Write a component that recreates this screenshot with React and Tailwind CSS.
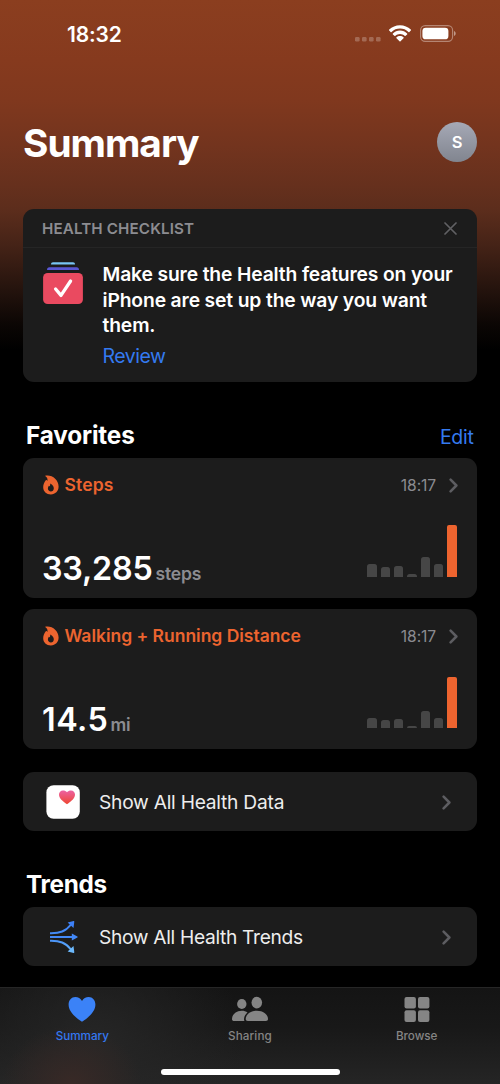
import React from "react";

function StatusBar() {
  return (
    <div className="flex h-[68px] items-center pl-[67px] pr-[44px] text-white">
      <span className="text-[21px] leading-[21px] font-semibold tracking-[-0.15px]">18:32</span>
      <div className="ml-auto flex items-center">
        <svg width="26" height="5" viewBox="0 0 26 5" className="mt-[11px]" fill="#fff" fillOpacity="0.24">
          <rect x="0" y="0" width="4.6" height="4.6" rx="1.3" />
          <rect x="7" y="0" width="4.6" height="4.6" rx="1.3" />
          <rect x="14" y="0" width="4.6" height="4.6" rx="1.3" />
          <rect x="21" y="0" width="4.6" height="4.6" rx="1.3" />
        </svg>
        <svg width="22" height="17" viewBox="0 0 22 17" className="ml-[8px] mt-[-1px]" fill="#fff">
          <path d="M11 0.2C15.2 0.2 19 1.8 21.8 4.5C22.1 4.8 22.1 5.2 21.8 5.5L20.4 6.9C20.1 7.2 19.7 7.2 19.4 6.9C17.2 4.8 14.2 3.6 11 3.6C7.8 3.6 4.8 4.8 2.6 6.9C2.3 7.2 1.9 7.2 1.6 6.9L0.2 5.5C-0.1 5.2 -0.1 4.8 0.2 4.5C3 1.8 6.8 0.2 11 0.2Z" />
          <path d="M11 5.6C13.8 5.6 16.3 6.7 18.1 8.4C18.4 8.7 18.4 9.1 18.1 9.4L16.6 10.8C16.3 11.1 15.9 11.1 15.6 10.8C14.4 9.7 12.8 9 11 9C9.2 9 7.6 9.7 6.4 10.8C6.1 11.1 5.7 11.1 5.4 10.8L3.9 9.4C3.6 9.1 3.6 8.7 3.9 8.4C5.7 6.7 8.2 5.6 11 5.6Z" />
          <path d="M11 10.9C12.4 10.9 13.6 11.4 14.5 12.2C14.8 12.5 14.8 12.9 14.5 13.2L11.5 16.2C11.2 16.5 10.8 16.5 10.5 16.2L7.5 13.2C7.2 12.9 7.2 12.5 7.5 12.2C8.4 11.4 9.6 10.9 11 10.9Z" />
        </svg>
        <svg width="36" height="17" viewBox="0 0 36 17" className="ml-[9px] mt-[-1px]">
          <rect x="0.6" y="0.6" width="32" height="15.8" rx="4.6" fill="none" stroke="#fff" strokeOpacity="0.38" strokeWidth="1.15" />
          <rect x="2.4" y="2.7" width="26" height="11.6" rx="3.4" fill="#fff" />
          <path d="M34 6V11C35.1 10.6 35.7 9.6 35.7 8.5C35.7 7.4 35.1 6.4 34 6Z" fill="#fff" fillOpacity="0.48" />
        </svg>
      </div>
    </div>
  );
}

function Chevron({ className }) {
  return (
    <svg width="9" height="15" viewBox="0 0 9 15" className={className} fill="none" stroke="#5d5d61" strokeWidth="2.5" strokeLinecap="round" strokeLinejoin="round">
      <path d="M1.6 1.6L7.4 7.5L1.6 13.4" />
    </svg>
  );
}

function Flame() {
  return (
    <svg width="16" height="20" viewBox="0 0 16 20" className="relative top-[-0.5px] shrink-0">
      <path d="M2.6 0.6C8.8 -0.6 15.6 4.3 15.6 11.6C15.6 16.4 12.3 19.4 7.9 19.4C3.4 19.4 0.2 16.4 0.2 12.2C0.2 9.4 1.3 7 2.8 5.2C3.2 4.7 3.9 4.9 4.1 5.4L4.4 6.1C4.9 4.1 4 2.2 2.5 1.3C2.2 1.1 2.3 0.7 2.6 0.6Z" fill="#ec642f" />
      <path d="M7.2 8.6C9.6 9.6 10.9 11.6 10.8 13.6C10.7 15.4 9.5 16.5 7.9 16.5C6.2 16.5 4.9 15.3 4.9 13.6C4.9 12.5 5.3 11.6 5.9 10.8C6.2 11 6.5 11.3 6.7 11.6C7.2 10.7 7.4 9.7 7.2 8.6Z" fill="#1c1c1c" />
    </svg>
  );
}

function Bars({ heights }) {
  return (
    <div className="flex h-[52px] items-end gap-[4px]">
      {heights.map((h, i) => (
        <div
          key={i}
          className={i === heights.length - 1 ? "w-[9.33px] rounded-t-[2px] bg-[#ee642f]" : "w-[9.33px] rounded-t-[2.5px] bg-[#464646]"}
          style={{ height: h }}
        />
      ))}
    </div>
  );
}

function MetricCard({ title, titleClass, value, valueClass, unit, unitClass, heights, barsClass }) {
  return (
    <section className="flex h-[140px] flex-col rounded-[11px] bg-[#1c1c1c] pl-[19.5px] pr-[19px]">
      <div className="mt-[17px] flex h-[20px] items-center">
        <Flame />
        <h3 className={titleClass}>{title}</h3>
        <span className="relative top-[1px] ml-auto text-[15.6px] leading-[20px] tracking-[-0.1px] text-[#8b8b90]">18:17</span>
        <Chevron className="mt-[1px] mr-[0.5px] ml-[12.5px]" />
      </div>
      <div className="mt-auto mb-[6px] flex items-end">
        <p className="ml-[-0.5px] flex items-baseline text-[32.3px] leading-[36px] font-semibold text-white">
          <span className={valueClass}>{value}</span>
          <span className={unitClass}>{unit}</span>
        </p>
        <div className={barsClass}>
          <Bars heights={heights} />
        </div>
      </div>
    </section>
  );
}

function LinkCard({ icon, label, labelClass }) {
  return (
    <section className="flex h-[59px] items-center rounded-[11px] bg-[#1c1c1c] pl-[23px] pr-[26px]">
      <div className="flex w-[34px] items-center justify-center">{icon}</div>
      <span className={labelClass}>{label}</span>
      <Chevron className="ml-auto mt-[1px]" />
    </section>
  );
}

function HealthIcon() {
  return (
    <svg width="34" height="34" viewBox="0 0 34 34" className="relative left-[0.4px]">
      <defs>
        <linearGradient id="heart" x1="0" y1="0" x2="0" y2="1">
          <stop offset="0" stopColor="#ec62a4" />
          <stop offset="1" stopColor="#ee4630" />
        </linearGradient>
      </defs>
      <rect x="0.4" y="0.2" width="33.4" height="33.6" rx="7.2" fill="#fff" />
      <path d="M21 19.3C16 16.2 13 12.8 13 9.6C13 7.1 14.7 5.4 16.9 5.4C18.6 5.4 20.1 6 21 7.3C21.9 6 23.4 5.4 25.1 5.4C27.3 5.4 29 7.1 29 9.6C29 12.8 26 16.2 21 19.3Z" fill="url(#heart)" />
    </svg>
  );
}

function TrendsIcon() {
  return (
    <svg width="30" height="34" viewBox="0 0 30 34" className="ml-[2px]" fill="none" strokeWidth="2">
      <defs>
        <linearGradient id="trend" gradientUnits="userSpaceOnUse" x1="0" y1="0" x2="0" y2="34">
          <stop offset="0" stopColor="#3d80f7" />
          <stop offset="0.55" stopColor="#4690f8" />
          <stop offset="1" stopColor="#6cb8fb" />
        </linearGradient>
      </defs>
      <g stroke="url(#trend)">
        <path d="M1 13.2C11 13.4 16.5 11.5 22 4.5" />
        <path d="M1 17.01L24 17" stroke="#4389f8" />
        <path d="M1 20.8C11 20.6 16.5 22.5 22 29.5" />
      </g>
      <path d="M18.6 2.4L24.6 1.1C25.1 1 25.4 1.3 25.3 1.8L24.5 8Z" fill="#3d80f7" />
      <path d="M22.8 13.4L28.4 16.5C28.9 16.8 28.9 17.2 28.4 17.5L22.8 20.6Z" fill="#4389f8" />
      <path d="M18.6 31.6L24.6 32.9C25.1 33 25.4 32.7 25.3 32.2L24.5 26Z" fill="#6cb8fb" />
    </svg>
  );
}

function ChecklistIcon() {
  return (
    <svg width="40" height="42" viewBox="0 0 40 42" className="shrink-0">
      <path d="M8 2.6C8 1 8.8 0.2 10 0.2H30C31.2 0.2 32 1 32 2.6Z" fill="#78c5f4" />
      <path d="M4 8C4 6.2 4.9 5.2 6.3 5.2H33.7C35.1 5.2 36 6.2 36 8Z" fill="#5957d3" />
      <rect x="0.1" y="11" width="39.8" height="31" rx="4.6" fill="#ea4a60" />
      <path d="M12.6 27L18 33.4L27.6 19" fill="none" stroke="#fff" strokeWidth="3.3" strokeLinecap="round" strokeLinejoin="round" />
    </svg>
  );
}

function TabBar() {
  return (
    <nav className="flex h-[97px] flex-col border-t border-[#262626] bg-[radial-gradient(ellipse_70px_58px_at_72px_100%,#382926_0%,#2c262500_100%),radial-gradient(ellipse_150px_130px_at_95px_60%,#262626_0%,#26262600_100%),linear-gradient(to_bottom,#141414,#181818_40%,#252525)]">
      <div className="grid h-[62px] grid-cols-3 text-[11.7px] leading-[14px] font-medium text-[#858585]">
        <div className="flex flex-col items-center pt-[8px] pr-[2px] text-[#3478f0]">
          <svg width="28" height="26" viewBox="0 0 28 26" fill="#3b82f7">
            <path d="M14 25.8C5.6 20.4 0.6 14.6 0.6 8.6C0.6 4.3 3.5 1 7.3 1C10.2 1 12.6 2.3 14 4.9C15.4 2.3 17.8 1 20.7 1C24.5 1 27.4 4.3 27.4 8.6C27.4 14.6 22.4 20.4 14 25.8Z" />
          </svg>
          <span className="mt-[7px] tracking-[-0.05px]">Summary</span>
        </div>
        <div className="flex flex-col items-center pt-[8px]">
          <svg width="38" height="26" viewBox="0 0 38 26" fill="#858585">
            <ellipse cx="10.8" cy="8" rx="4.7" ry="5.1" />
            <path d="M1 23.2C1 18.6 5.2 14.8 10.8 14.8C13 14.8 15 15.4 16.5 16.4C14.3 18.3 13 20.8 13 23.3C13 24.2 13.2 24.7 13.5 25H3.2C1.8 25 1 24.4 1 23.2Z" />
            <ellipse cx="25.8" cy="6.6" rx="5.3" ry="5.8" />
            <path d="M14.7 23.1C14.7 18.7 19 14.7 25.9 14.7C32.7 14.7 37 18.7 37 23.1C37 24.4 36.2 25 34.8 25H16.9C15.5 25 14.7 24.4 14.7 23.1Z" />
          </svg>
          <span className="mt-[7px] tracking-[0.1px]">Sharing</span>
        </div>
        <div className="flex flex-col items-center pt-[8px]">
          <svg width="26" height="26" viewBox="0 0 26 26" fill="#858585">
            <rect x="0.5" y="1" width="11.4" height="11.6" rx="2" />
            <rect x="14" y="1" width="11.4" height="11.6" rx="2" />
            <rect x="0.5" y="14.3" width="11.4" height="11.6" rx="2" />
            <rect x="14" y="14.3" width="11.4" height="11.6" rx="2" />
          </svg>
          <span className="mt-[7px] tracking-[-0.05px]">Browse</span>
        </div>
      </div>
      <div className="mx-auto mt-[19px] h-[6px] w-[179px] rounded-full bg-white" />
    </nav>
  );
}

export default function App() {
  return (
    <div className="flex h-[1084px] w-[500px] flex-col overflow-hidden bg-black bg-[linear-gradient(to_bottom,#8b3e1f_0px,#863a1e_60px,#80381e_100px,#73341e_145px,#66301d_185px,#5c2d1c_210px,#452317_245px,#24130d_290px,#0b0604_325px,#000_350px)] font-['Inter',sans-serif]">
      <StatusBar />
      <main className="flex h-[919px] flex-col px-[23px]">
        <header className="mt-[53px] flex h-[41px] items-center justify-between">
          <h1 className="pt-[1px] text-[38.8px] leading-[41px] font-bold tracking-[-1px] text-white">Summary</h1>
          <div className="flex h-[40px] w-[40px] items-center justify-center rounded-full bg-linear-to-b from-[#a6a9b6] to-[#81858f] pt-[2px] text-[16.5px] font-semibold text-white">
            S
          </div>
        </header>

        <section className="mt-[47px] h-[173px] rounded-[11px] bg-[#1c1c1c]">
          <div className="flex h-[39px] items-center border-b border-[#252525] pl-[19px] pr-[20px]">
            <h2 className="pt-[2px] text-[15.2px] font-semibold tracking-[0.12px] text-[#8c8c91]">HEALTH CHECKLIST</h2>
            <svg width="13" height="13" viewBox="0 0 13 13" className="mt-[1px] ml-auto" stroke="#606063" strokeWidth="1.7" strokeLinecap="round">
              <path d="M1 1L12 12M12 1L1 12" />
            </svg>
          </div>
          <div className="flex pl-[20px] pt-[14px]">
            <ChecklistIcon />
            <div className="ml-[19.5px] text-[19.3px] leading-[25.7px] whitespace-nowrap text-white">
              <p className="font-semibold tracking-[-0.14px]">
                Make sure the Health features on your
                <br />
                iPhone are set up the way you want
                <br />
                them.
              </p>
              <a className="mt-[5px] block text-[19.5px] tracking-[-0.5px] text-[#347af0]">Review</a>
            </div>
          </div>
        </section>

        <div className="flex h-[76px] items-center justify-between pt-[29px] pr-[3.5px] pl-[3px]">
          <h2 className="text-[24.3px] leading-[30px] font-bold tracking-[-0.15px] text-white">Favorites</h2>
          <a className="relative top-[2px] text-[19.5px] leading-[30px] tracking-[-0.3px] text-[#347af0]">Edit</a>
        </div>
        <MetricCard
          title="Steps"
          titleClass="ml-[6px] text-[17.5px] leading-[20px] font-semibold tracking-[0.15px] text-[#ec642f]"
          value="33,285"
          valueClass="tracking-[-0.2px]"
          unit="steps"
          unitClass="ml-[3px] text-[17.5px] font-semibold tracking-[-0.2px] text-[#8c8c91]"
          heights={[12.5, 9.3, 10.5, 3, 19.3, 12.5, 51.5]}
          barsClass="mb-[15.5px] ml-auto mr-[1.5px]"
        />
        <div className="h-[11px]" />
        <MetricCard
          title="Walking + Running Distance"
          titleClass="ml-[6px] text-[17.5px] leading-[20px] font-semibold tracking-[-0.02px] text-[#ec642f]"
          value="14.5"
          valueClass="tracking-[0.5px]"
          unit="mi"
          unitClass="ml-[2px] text-[17.5px] font-semibold tracking-[-0.1px] text-[#8c8c91]"
          heights={[10, 8, 9, 2, 17, 10, 51.3]}
          barsClass="mb-[15px] ml-auto mr-[1.5px]"
        />
        <div className="h-[23px]" />
        <LinkCard
          icon={<HealthIcon />}
          label="Show All Health Data"
          labelClass="ml-[19px] text-[19.2px] tracking-[-0.24px] text-[#ededed] pt-[1px]"
        />
        <div className="flex h-[76px] items-center pt-[30px] pl-[3px]">
          <h2 className="text-[24.3px] leading-[30px] font-bold tracking-[-0.3px] text-white">Trends</h2>
        </div>
        <LinkCard
          icon={<TrendsIcon />}
          label="Show All Health Trends"
          labelClass="ml-[19px] text-[19.2px] tracking-[-0.32px] text-[#ededed] pt-[1px]"
        />
      </main>
      <TabBar />
    </div>
  );
}
